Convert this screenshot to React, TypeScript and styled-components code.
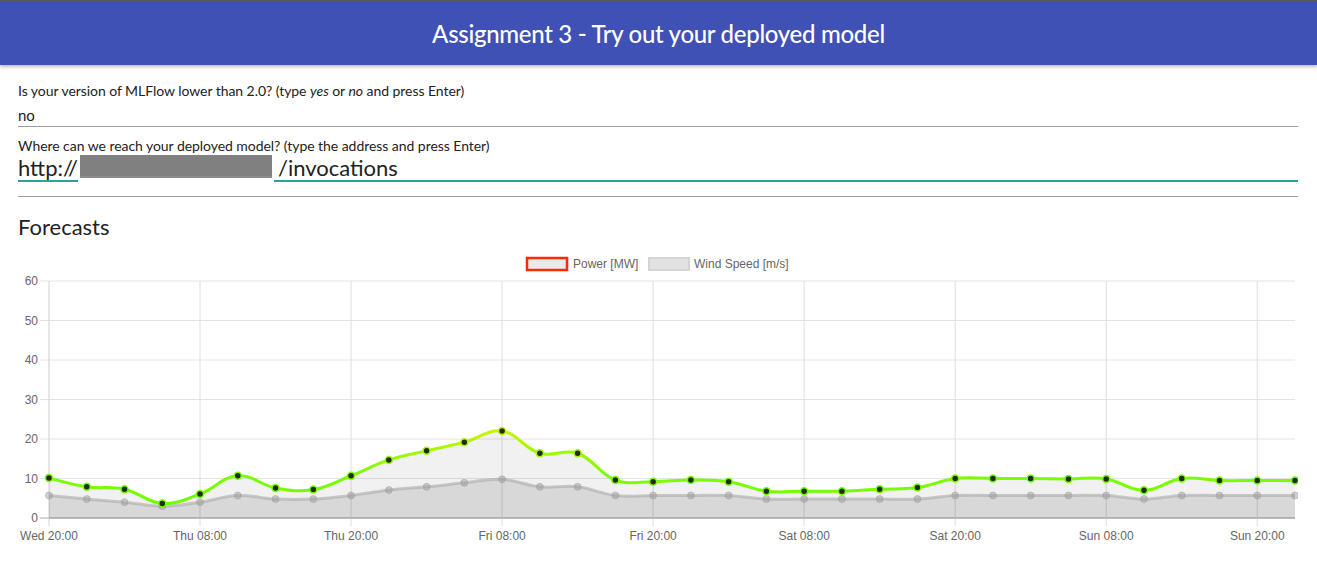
import * as React from "react";
import styled, { createGlobalStyle } from "styled-components";

const GlobalStyle = createGlobalStyle`
	html, body {
		margin: 0;
		padding: 0;
		background: #fff;
		font-family: Lato, "Open Sans", sans-serif;
		color: #222;
	}
`;

const Header = styled.header`
	height: 64px;
	border-top: 1px solid #5a5a5a;
	background: #3f51b5;
	box-shadow: 0 2px 3px rgba(0, 0, 0, 0.25);
	display: flex;
	align-items: center;
	justify-content: center;
	color: #fff;
	font-size: 24px;
	font-weight: 500;
	letter-spacing: -0.3px;
`;

const Main = styled.main`
	padding: 0 19px 0 18px;
	display: flex;
	flex-direction: column;
`;

const Label = styled.div<{ $top: number }>`
	margin-top: ${(p) => p.$top}px;
	font-size: 14px;
	line-height: 19px;
	color: #222;
	letter-spacing: -0.05px;
`;

const Input = styled.input`
	display: block;
	width: 100%;
	box-sizing: border-box;
	height: 27px;
	margin: 0;
	padding: 3px 0 0;
	border: none;
	border-bottom: 1px solid #9e9e9e;
	font-family: inherit;
	font-size: 15px;
	line-height: 23px;
	color: #222;
	background: transparent;
	outline: none;
`;

const UrlField = styled.div`
	display: flex;
	align-items: center;
	height: 25px;
	border-bottom: 2px solid #26a69a;
	font-size: 22px;
	line-height: 25px;
	color: #222;
`;

const Redacted = styled.span`
	display: inline-block;
	width: 192px;
	height: 23px;
	margin: 0 6px 0 2px;
	align-self: flex-start;
	background: #808080;
	box-shadow: inset 0 -5px 0 -3px #8c8c8c, 0 4px 0 2px #fff;
`;

const Rule = styled.hr`
	margin: 14px 0 0;
	border: none;
	border-top: 1px solid #9e9e9e;
	height: 0;
`;

const Title = styled.h2`
	margin: 17px 0 0;
	font-size: 22px;
	font-weight: 400;
	line-height: 26px;
	color: #222;
`;

const ChartBox = styled.div`
	margin-top: 10px;
	height: 300px;
`;

const power = [10.1, 7.9, 7.3, 3.7, 6.1, 10.7, 7.6, 7.2, 10.7, 14.7, 17.0, 19.2, 22.0, 16.4, 16.4, 9.6, 9.2, 9.6, 9.2, 6.8, 6.8, 6.8, 7.3, 7.7, 10.0, 10.0, 10.0, 9.9, 9.9, 7.0, 10.0, 9.5, 9.5, 9.5];
const wind = [5.7, 4.8, 4.0, 3.0, 4.0, 5.7, 4.8, 4.8, 5.7, 7.1, 7.9, 8.9, 9.8, 7.9, 7.9, 5.7, 5.7, 5.7, 5.7, 4.8, 4.8, 4.8, 4.8, 4.8, 5.7, 5.7, 5.7, 5.7, 5.7, 4.8, 5.7, 5.7, 5.7, 5.7];
const xLabels = ["Wed 20:00", "Thu 08:00", "Thu 20:00", "Fri 08:00", "Fri 20:00", "Sat 08:00", "Sat 20:00", "Sun 08:00", "Sun 20:00"];

const LEFT = 31;
const RIGHT = 1277;
const TOP = 31;
const BOTTOM = 268;
const step = (RIGHT - LEFT) / 33;
const xAt = (i: number) => LEFT + i * step;
const yAt = (v: number) => BOTTOM - v * ((BOTTOM - TOP) / 60);

type Pt = { x: number; y: number };

// chart.js style cubic spline, tension 0.4
function splinePath(values: number[]) {
	const pts: Pt[] = values.map((v, i) => ({ x: xAt(i), y: yAt(v) }));
	const ctrl = (i: number) => {
		const prev = pts[i - 1] || pts[i];
		const cur = pts[i];
		const next = pts[i + 1] || pts[i];
		const d01 = Math.hypot(cur.x - prev.x, cur.y - prev.y);
		const d12 = Math.hypot(next.x - cur.x, next.y - cur.y);
		const tot = d01 + d12 || 1;
		const fa = 0.4 * (d01 / tot);
		const fb = 0.4 * (d12 / tot);
		return {
			p: { x: cur.x - fa * (next.x - prev.x), y: Math.min(BOTTOM, cur.y - fa * (next.y - prev.y)) },
			n: { x: cur.x + fb * (next.x - prev.x), y: Math.min(BOTTOM, cur.y + fb * (next.y - prev.y)) },
		};
	};
	const c = pts.map((_, i) => ctrl(i));
	let d = `M${pts[0].x},${pts[0].y}`;
	for (let i = 0; i < pts.length - 1; i++) {
		d += ` C${c[i].n.x},${c[i].n.y} ${c[i + 1].p.x},${c[i + 1].p.y} ${pts[i + 1].x},${pts[i + 1].y}`;
	}
	return d;
}

const powerLine = splinePath(power);
const windLine = splinePath(wind);
const closeArea = (d: string, n: number) => `${d} L${xAt(n - 1)},${BOTTOM} L${xAt(0)},${BOTTOM} Z`;

const axisText = { fontFamily: '"Liberation Sans", Arial, sans-serif', fontSize: 12, fill: "#666" };

function ForecastChart() {
	return (
		<svg width="1280" height="300" viewBox="0 0 1280 300">
			<defs>
				<linearGradient id="powerGrad" gradientUnits="userSpaceOnUse" x1="0" y1={BOTTOM} x2="0" y2={TOP}>
					<stop offset="0" stopColor="#6aff00" />
					<stop offset="0.18" stopColor="#7cfc00" />
					<stop offset="0.37" stopColor="#c6f500" />
					<stop offset="0.6" stopColor="#ffd000" />
					<stop offset="1" stopColor="#ff2000" />
				</linearGradient>
			</defs>

			{/* legend */}
			<rect x="509" y="8" width="40" height="12" fill="#eaeaea" stroke="#ff2a00" strokeWidth="2.5" />
			<text x="555" y="18" {...axisText}>Power [MW]</text>
			<rect x="631" y="8" width="40" height="12" fill="#e2e2e2" stroke="#d4d4d4" strokeWidth="2" />
			<text x="676" y="18" {...axisText}>Wind Speed [m/s]</text>

			{/* grid */}
			{[0, 10, 20, 30, 40, 50, 60].map((v) => (
				<g key={v}>
					<line x1="22" x2={RIGHT} y1={yAt(v)} y2={yAt(v)} stroke={v === 0 ? "#a8a8a8" : "#e4e4e4"} strokeWidth="1" />
					<text x="20" y={yAt(v) + 4} textAnchor="end" {...axisText}>{v}</text>
				</g>
			))}
			{xLabels.map((l, i) => (
				<g key={l}>
					<line x1={xAt(i * 4)} x2={xAt(i * 4)} y1={TOP} y2={BOTTOM + 8} stroke={i === 0 ? "#cfcfcf" : "#dedede"} strokeWidth="1" />
					<text x={xAt(i * 4)} y="290" textAnchor="middle" {...axisText}>{l}</text>
				</g>
			))}

			{/* power area + wind area */}
			<path d={closeArea(powerLine, power.length)} fill="rgba(0,0,0,0.055)" />
			<path d={closeArea(windLine, wind.length)} fill="rgba(0,0,0,0.1)" />
			<line x1={LEFT} x2={RIGHT} y1={BOTTOM} y2={BOTTOM} stroke="#a8a8a8" strokeWidth="1" />

			<path d={windLine} fill="none" stroke="rgba(170,170,170,0.6)" strokeWidth="3" />
			{wind.map((v, i) => (
				<circle key={i} cx={xAt(i)} cy={yAt(v)} r="3.5" fill="rgba(150,150,150,0.45)" stroke="rgba(160,160,160,0.5)" strokeWidth="1" />
			))}

			<path d={powerLine} fill="none" stroke="url(#powerGrad)" strokeWidth="3" />
			{power.map((v, i) => (
				<circle key={i} cx={xAt(i)} cy={yAt(v)} r="3.5" fill="#1f2d14" stroke="url(#powerGrad)" strokeWidth="1.5" />
			))}
		</svg>
	);
}

export default function App() {
	return (
		<>
			<GlobalStyle />
			<Header>Assignment 3 - Try out your deployed model</Header>
			<Main>
				<Label $top={16}>
					Is your version of MLFlow lower than 2.0? (type <i>yes</i> or <i>no</i> and press Enter)
				</Label>
				<Input defaultValue="no" readOnly />
				<Label $top={9}>Where can we reach your deployed model? (type the address and press Enter)</Label>
				<UrlField>
					<span>http://</span>
					<Redacted />
					<span>/invocations</span>
				</UrlField>
				<Rule />
				<Title>Forecasts</Title>
				<ChartBox>
					<ForecastChart />
				</ChartBox>
			</Main>
		</>
	);
}
